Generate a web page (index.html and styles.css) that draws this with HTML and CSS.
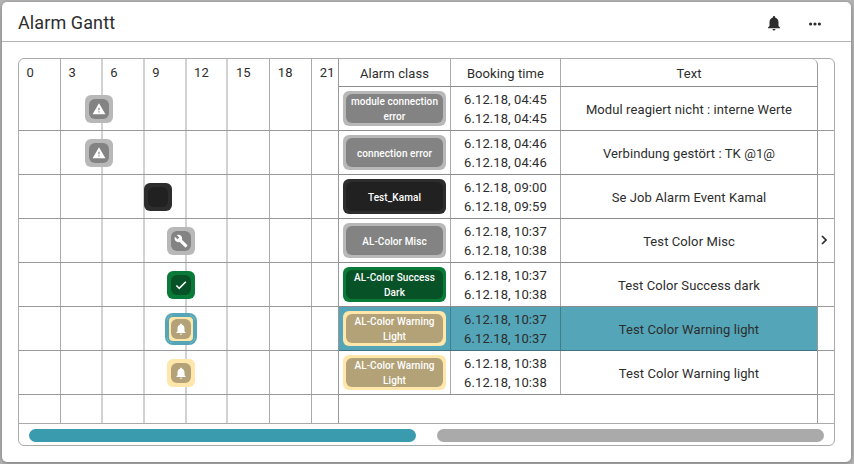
FILE: index.html
```html
<!DOCTYPE html>
<html lang="en">
<head>
<meta charset="utf-8">
<title>Alarm Gantt</title>
<link rel="stylesheet" href="styles.css">
</head>
<body>
<svg class="symbols" aria-hidden="true">
  <symbol id="warning" viewBox="0 0 24 24"><path d="M1 21h22L12 2 1 21zm12-3h-2v-2h2v2zm0-4h-2v-4h2v4z"/></symbol>
  <symbol id="wrench" viewBox="0 0 24 24"><path d="M22.7 19l-9.1-9.1c.9-2.3.4-5-1.5-6.9-2-2-5-2.4-7.4-1.3L9 6 6 9 1.6 4.7C.4 7.1.9 10.1 2.9 12.1c1.9 1.9 4.6 2.4 6.9 1.5l9.1 9.1c.4.4 1 .4 1.4 0l2.3-2.3c.5-.4.5-1.1.1-1.4z"/></symbol>
  <symbol id="check" viewBox="0 0 24 24"><path d="M9 15.8L5 11.8l-1.9 1.9L9 19.6 21.2 7.4l-1.9-1.9L9 15.8z"/></symbol>
  <symbol id="bell" viewBox="0 0 24 24"><path d="M12 22c1.1 0 2-.9 2-2h-4c0 1.1.9 2 2 2zm6-6v-5c0-3.1-1.6-5.6-4.5-6.3V4c0-.8-.7-1.5-1.5-1.5s-1.5.7-1.5 1.5v.7C7.6 5.4 6 7.9 6 11v5l-2 2v1h16v-1l-2-2z"/></symbol>
</svg>
<main class="card">
  <header class="card-header">
    <h1>Alarm Gantt</h1>
    <svg class="header-bell"><use href="#bell"/></svg>
    <svg class="header-more" viewBox="0 0 14 4"><circle cx="2.6" cy="2" r="1.6"/><circle cx="7" cy="2" r="1.6"/><circle cx="11.4" cy="2" r="1.6"/></svg>
  </header>
  <section class="frame">
    <div class="panels">
      <div class="timeline">
        <div class="hours"><span>0</span><span>3</span><span>6</span><span>9</span><span>12</span><span>15</span><span>18</span><span>21</span></div>
        <div class="tracks">
          <div class="track"><i class="marker grey" style="left:66.4px"><b><svg><use href="#warning"/></svg></b></i></div>
          <div class="track"><i class="marker grey" style="left:66.4px"><b><svg><use href="#warning"/></svg></b></i></div>
          <div class="track"><i class="marker black" style="left:125.4px"><b></b></i></div>
          <div class="track"><i class="marker grey" style="left:148px"><b><svg><use href="#wrench"/></svg></b></i></div>
          <div class="track"><i class="marker green" style="left:148px"><b><svg><use href="#check"/></svg></b></i></div>
          <div class="track"><i class="marker sand selected" style="left:148.4px"><b><svg><use href="#bell"/></svg></b></i></div>
          <div class="track"><i class="marker sand" style="left:148.4px"><b><svg><use href="#bell"/></svg></b></i></div>
        </div>
      </div>
      <div class="table">
        <div class="row head"><div>Alarm class</div><div>Booking time</div><div>Text</div></div>
        <div class="row"><div><span class="tag grey">module connection<br>error</span></div><div>6.12.18, 04:45<br>6.12.18, 04:45</div><div>Modul reagiert nicht : interne Werte</div></div>
        <div class="row"><div><span class="tag grey">connection error</span></div><div>6.12.18, 04:46<br>6.12.18, 04:46</div><div>Verbindung gestört : TK @1@</div></div>
        <div class="row"><div><span class="tag black">Test_Kamal</span></div><div>6.12.18, 09:00<br>6.12.18, 09:59</div><div>Se Job Alarm Event Kamal</div></div>
        <div class="row"><div><span class="tag grey">AL-Color Misc</span></div><div>6.12.18, 10:37<br>6.12.18, 10:38</div><div>Test Color Misc</div></div>
        <div class="row"><div><span class="tag green">AL-Color Success<br>Dark</span></div><div>6.12.18, 10:37<br>6.12.18, 10:38</div><div>Test Color Success dark</div></div>
        <div class="row active"><div><span class="tag sand">AL-Color Warning<br>Light</span></div><div>6.12.18, 10:37<br>6.12.18, 10:37</div><div>Test Color Warning light</div></div>
        <div class="row"><div><span class="tag sand">AL-Color Warning<br>Light</span></div><div>6.12.18, 10:38<br>6.12.18, 10:38</div><div>Test Color Warning light</div></div>
      </div>
      <div class="strip">
        <div></div><div></div><div></div>
        <div><svg class="chevron" viewBox="0 0 6 10"><path d="M1 1l4 4-4 4"/></svg></div>
        <div></div><div></div><div></div>
      </div>
    </div>
    <div class="scrollbars"><div class="bar teal"></div><div class="bar"></div></div>
  </section>
</main>
</body>
</html>
```
FILE: styles.css
```css
* { box-sizing: border-box; }
body { margin: 0; height: 464px; padding: 2px 3px 2px 2px; background: #b4b4b4; overflow: hidden; font: 13px/19px Roboto, sans-serif; color: #2d2d2d; }
.symbols { display: none; }
.card { height: 460px; background: #fff; border-radius: 5px; box-shadow: 0 1px 4px rgba(0, 0, 0, .35); }
.card-header { display: flex; align-items: center; height: 40px; padding: 0 29px 0 16px; border-bottom: 1px solid #b4b4b4; }
h1 { flex: 1; margin: 0; font-size: 18px; font-weight: 400; letter-spacing: .1px; line-height: 24px; padding-top: 3px; }
.header-bell { width: 18px; height: 18px; margin: 3px 25px 0 0; fill: #2d2d2d; }
.header-more { width: 14px; height: 4px; margin-top: 4px; fill: #2d2d2d; }
.frame { width: 817px; height: 388px; margin: 16px 0 0 16px; border: 1px solid #aaa; border-radius: 6px; }
.panels { display: flex; height: 365px; border-bottom: 1px solid #aaa; }

.timeline { position: relative; width: 319px; }
.hours { display: flex; height: 364px; overflow: hidden; }
.hours span { flex: 0 0 41.9px; padding: 4px 0 0 7.5px; border-right: 1px solid #aaa; letter-spacing: .1px; }
.hours span:nth-child(n+2):nth-child(-n+5) { border-right: 2px solid #d2d2d2; }
.hours span:last-child { border: 0; }
.tracks { position: absolute; inset: 28px 0 0 0; }
.track { position: relative; height: 44px; border-bottom: 1px solid #999; }
.marker { position: absolute; top: 8px; width: 28px; height: 28px; padding: 4px; border-radius: 6px; }
.marker b { display: flex; align-items: center; justify-content: center; width: 20px; height: 20px; border-radius: 6px; }
.marker svg { width: 14px; height: 14px; fill: #fff; }
.marker.selected { box-shadow: inset 0 0 0 2px #54a5b8, 0 0 0 2px #54a5b8; }

.grey { background: #b8b8b8; border-color: #b8b8b8; }
.black { background: #2d2d2d; border-color: #2d2d2d; }
.green { background: #0a7a38; border-color: #0a7a38; }
.sand { background: #ffe6aa; border-color: #ffe6aa; }
.grey b { background: #838383; }
.black b { background: #212121; }
.green b { background: #075226; }
.sand b { background: #b3a277; }

.table { width: 480px; border: solid #999; border-width: 0 1px; border-top-right-radius: 6px; }
.row { display: grid; grid-template-columns: 112px 110px 1fr; height: 44px; border-bottom: 1px solid #8c8c8c; text-align: center; letter-spacing: .09px; }
.row > div { display: flex; align-items: center; justify-content: center; border-right: 1px solid #aaa; }
.row > div:last-child { border: 0; padding-top: 2px; }
.head { height: 28px; }
.head > div { padding-top: 2px; }
.active { background: #54a5b8; border-color: #3d7480; }
.active > div { border-color: #3f7f8d; }
.tag { position: relative; z-index: 0; display: flex; align-items: center; justify-content: center; width: 103px; height: 35px; padding-top: 1px; border-radius: 6px; color: #fff; font-size: 10px; font-weight: 500; line-height: 15px; letter-spacing: .08px; }
.tag::before { content: ""; position: absolute; z-index: -1; inset: 3px; border-radius: 6px; background: #838383; }
.tag.black::before { background: #212121; }
.tag.green::before { background: #075226; }
.tag.sand::before { background: #b3a277; }
.strip { flex: 1; padding-top: 28px; }
.strip div { display: flex; align-items: center; justify-content: center; height: 44px; border-bottom: 1px solid #999; }
.chevron { width: 6px; height: 10px; margin: 0 4px 2px 0; fill: none; stroke: #2d2d2d; stroke-width: 1.7; }
.scrollbars { display: flex; gap: 21px; padding: 5px 10px 0; }
.bar { flex: 1; height: 13px; border-radius: 7px; background: #aaa; }
.teal { background: #3a9aae; }
```
